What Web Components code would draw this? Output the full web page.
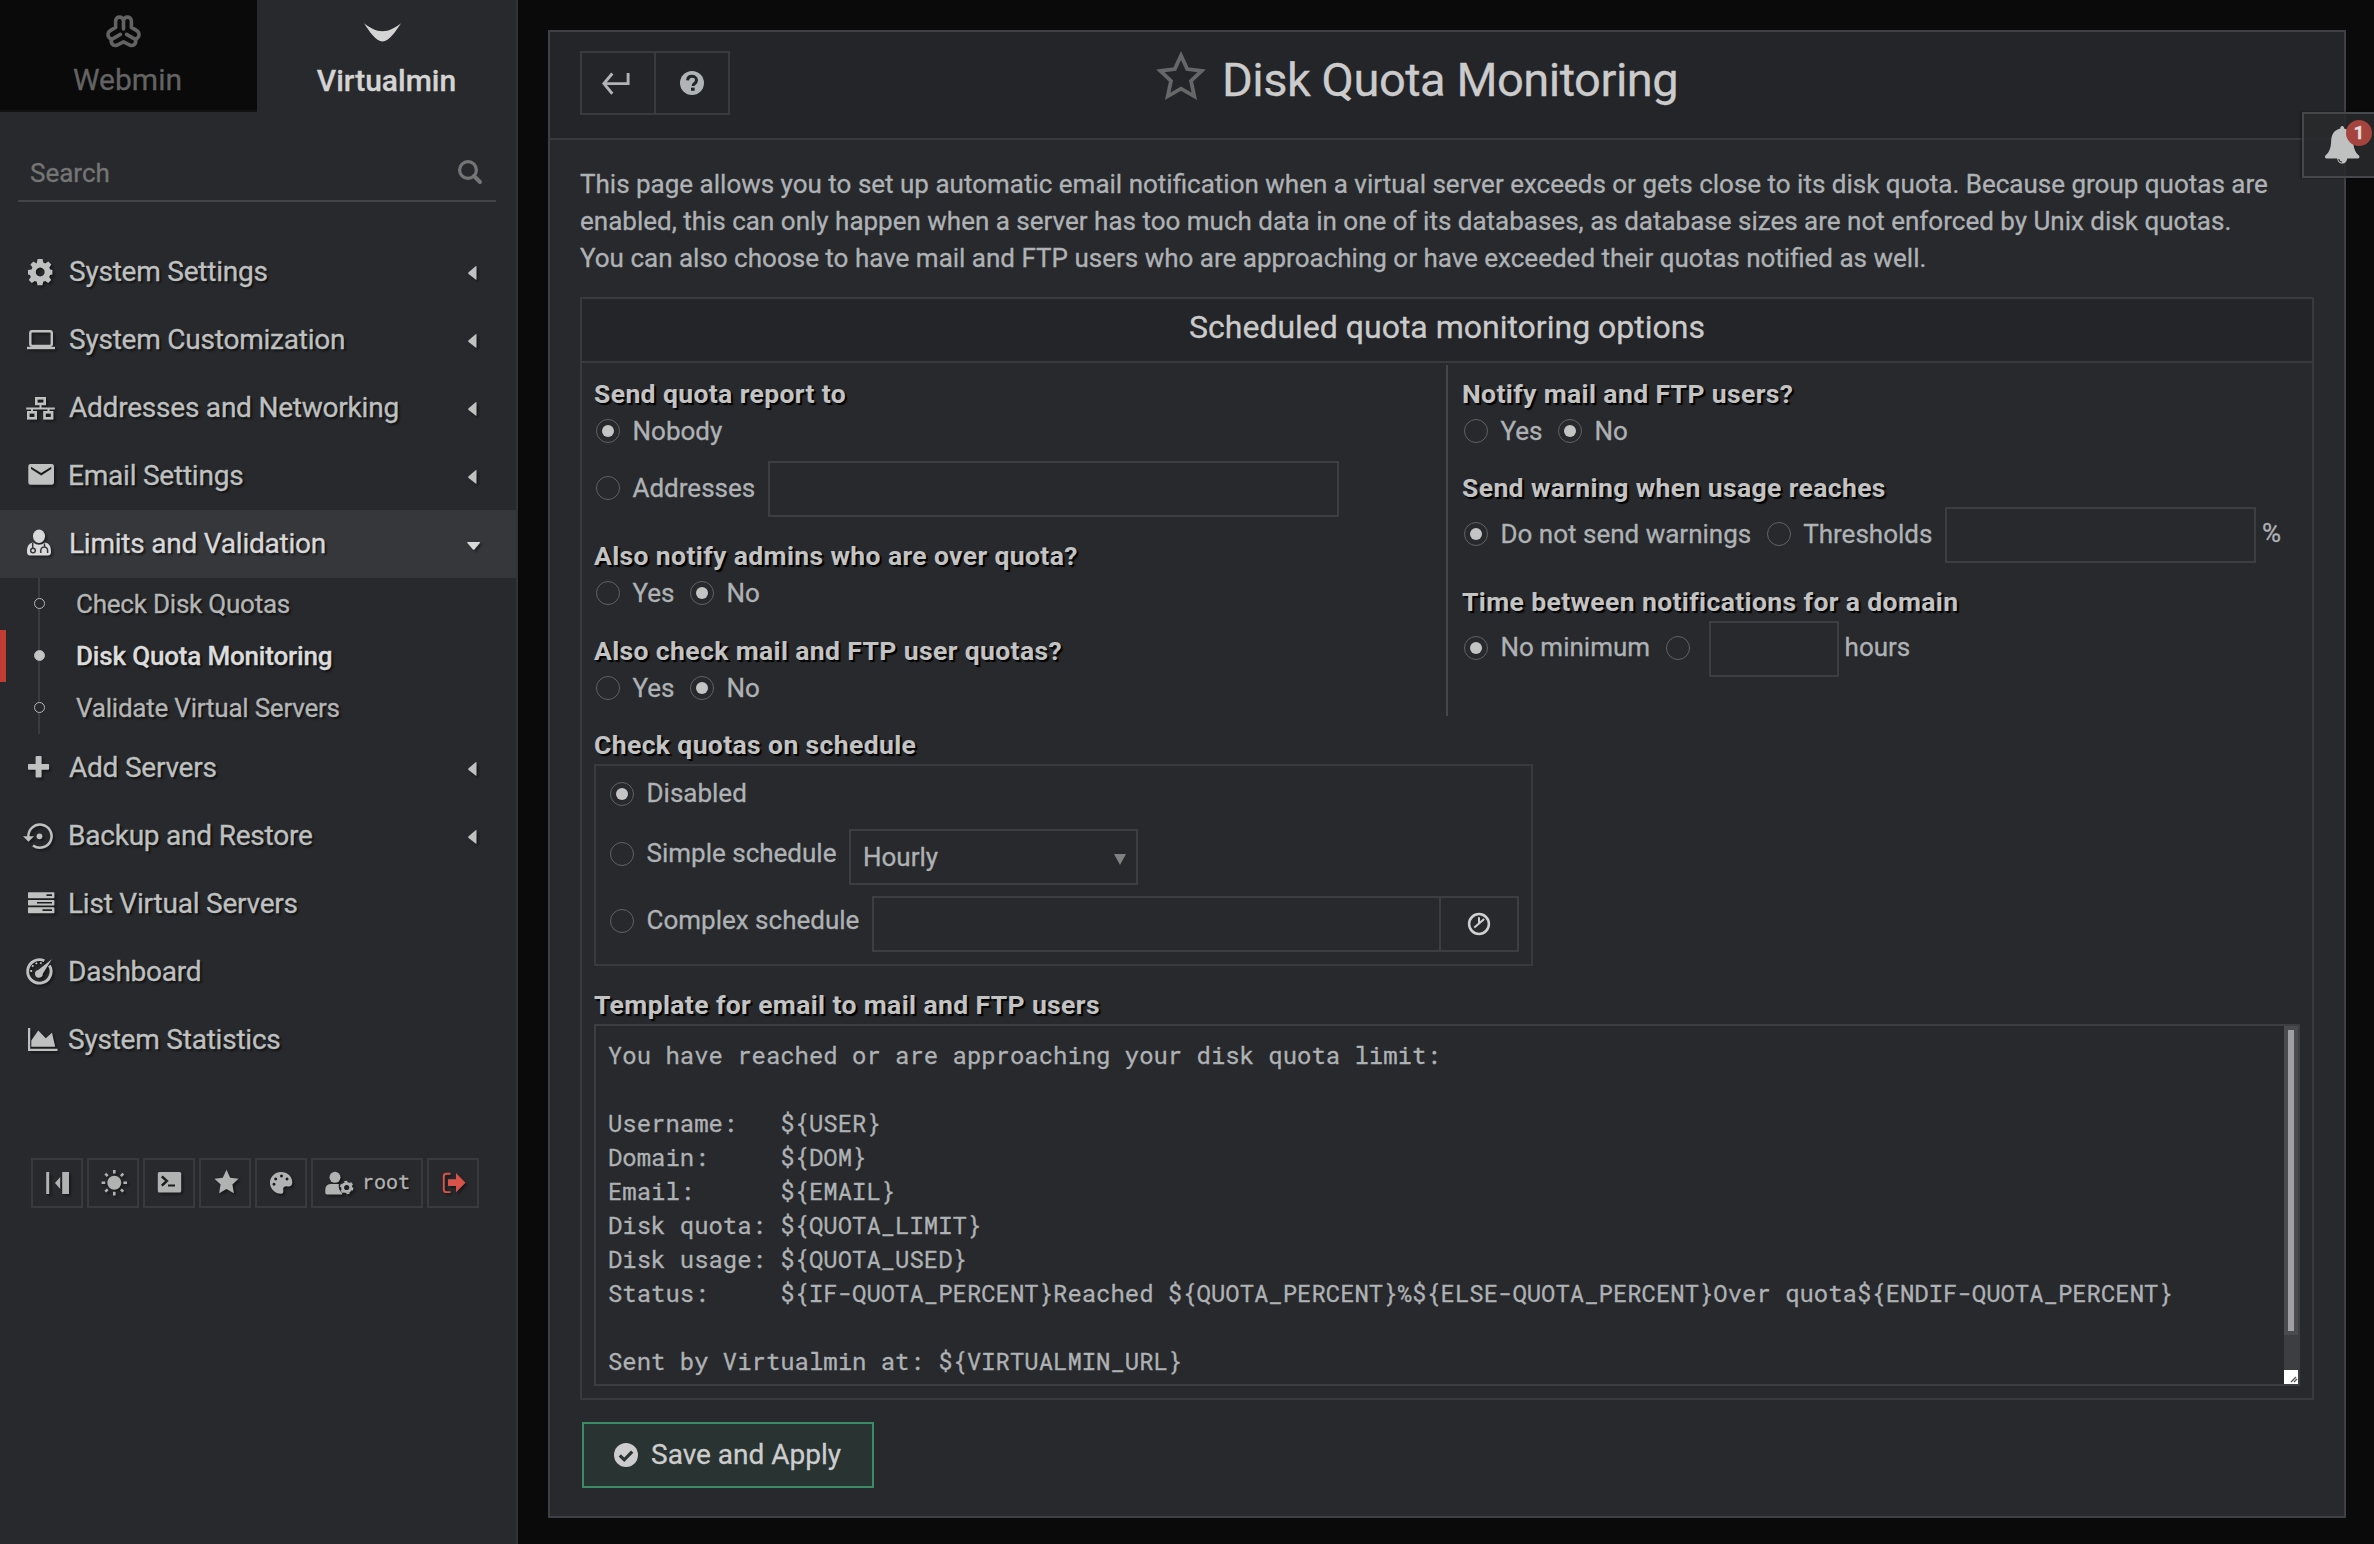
<!DOCTYPE html>
<html lang="en">
<head>
<meta charset="utf-8">
<title>Disk Quota Monitoring</title>
<style>
html,body{margin:0;height:1544px;overflow:hidden;background:#0a0a0a}
body{font-family:Roboto,"Liberation Sans",sans-serif;font-size:26px;line-height:37px;color:#aeb2b5;-webkit-text-stroke:.3px currentColor}
</style>
</head>
<body>
<vm-app></vm-app>
<script>
const ICONS = {
  webmin:'<g fill="none" stroke="currentColor" stroke-width="3.6" stroke-linecap="round" stroke-linejoin="round"><path d="M17.5 14V6.2C17.5.8 9.6.8 9.6 6.2V12.4L4.6 15.4C1.4 17.3 1.2 20.6 3.4 22.8L5.3 24.6C4.7 29.6 8.2 31.6 11.6 29.8L17.5 26.9 23.4 29.8C26.8 31.6 30.3 29.6 29.7 24.6L31.6 22.8C33.8 20.6 33.6 17.3 30.4 15.4L25.4 12.4V6.2C25.4.8 17.5.8 17.5 6.2M14.4 19.4L5.3 24.6M20.6 19.4L29.7 24.6"/></g>',
  virtualmin:'<path d="M0 .3C6 5 12 8.3 18.5 8.3S31 5 37 .3C32 8 25 18.5 18.5 18.5S5 8 0 .3Z"/>',
  search:'<circle cx="10" cy="10" r="8.4" fill="none" stroke="currentColor" stroke-width="3.2"/><path d="M16 16l6 6" stroke="currentColor" stroke-width="4" stroke-linecap="round"/>',
  /* menu icons are drawn on a 44 x 68 tile */
  gear:'<path fill-rule="evenodd" d="M17.6 21h5l.7 3.6 2 .8 3-2 3 3.2-2 3 .9 2 2.2.4v4.4l-2.3.5-.9 2 2 3-3 3-3-1.900-2 .8-.7 3.500h-5l-.7-3.500-2-.8-3 1.900-3-3 2-3-.9-2L8 36.400V32l3.500-.4.9-2-2-3 3-3.200 3 2 .500-.8zM20.200 29.600a4.400 4.400 0 1 0 .01 0z"/>',
  laptop:'<rect x="10.300" y="25.300" width="21.500" height="14.600" rx="1.800" fill="none" stroke="currentColor" stroke-width="2.400"/><path d="M7 40.800h28v2.400H7z"/>',
  network:'<g fill="none" stroke="currentColor" stroke-width="2.600"><rect x="16.300" y="24.300" width="8.400" height="5.600"/><rect x="8.300" y="38.300" width="7.400" height="6"/><rect x="24.500" y="38.300" width="7.600" height="6"/></g><path d="M6.200 33.400h28.600v2.200H6.200zM19.500 30h2v4h-2zM11 35h2v3h-2zM27.500 35h2v3h-2z"/>',
  mail:'<path fill-rule="evenodd" d="M10.500 22h21.300a2.200 2.200 0 0 1 2.200 2.200v16.300a2.200 2.200 0 0 1-2.200 2.200H10.500a2.200 2.200 0 0 1-2.200-2.200V24.200A2.200 2.200 0 0 1 10.500 22zM11 24.700v2.400l10.200 6.300 10.100-6.300v-2.400l-10.100 6.200z"/>',
  doctor:'<ellipse cx="19" cy="26.300" rx="6" ry="6.700"/><path d="M13 32.500q6 4.500 12 0c4.500.8 6 4 6 9.500 0 2.600-1.500 3.400-3 3.400H10c-2 0-3-1-3-3.400 0-5.500 1.500-8.700 6-9.500z"/><g fill="none" stroke="#36373b" stroke-width="1.500"><circle cx="13" cy="40.500" r="2.300"/><path d="M12.700 33v5M20.800 43v-2.600a3.400 3.400 0 0 1 6.800 0V43M24.500 33.500v3.600"/></g>',
  plus:'<path d="M16.500 22h4.200q.9 0 .9.900v7h6.600q.9 0 .9.900v4q0 .9-.9.900h-6.600v6.900q0 .9-.9.900h-4.200q-.9 0-.9-.9v-6.900H8.900q-.9 0-.9-.9v-4q0-.9.9-.9h6.700v-7q0-.9.900-.9z"/>',
  backup:'<path d="M8.400 35A11.600 11.600 0 1 1 13 43.400" fill="none" stroke="currentColor" stroke-width="2.500"/><circle cx="19.500" cy="34.300" r="2.900"/><path d="M3 34.300h11l-5.500 5.500z"/>',
  servers:'<path fill-rule="evenodd" d="M8.700 22.300h25q.7 0 .7.700v4.600q0 .7-.7.700h-25q-.7 0-.7-.7V23q0-.7.700-.7zM26.500 24.300v1.800H32v-1.800zM8.700 30h25q.7 0 .7.700v4q0 .7-.7.700h-25q-.7 0-.7-.7v-4q0-.7.700-.7zM17 32v1.500h15V32zM8.700 37.300h25q.7 0 .7.700v4.600q0 .7-.7.700h-25q-.7 0-.7-.7V38q0-.7.700-.7zM22.500 39.300v1.800H32v-1.800z"/>',
  gauge:'<path d="M29.400 27.400A11.700 11.700 0 1 1 24.300 22.800" fill="none" stroke="currentColor" stroke-width="2.900"/><path d="M31.800 21.200l-9 14.500a3.900 3.900 0 1 1-4.600-3.800z"/><path d="M10.300 33h1.800M12 27.500l1.500 1.100M16 24.700l.8 1.500M21 24.300l-.3 1.700" stroke="currentColor" stroke-width="1.800"/>',
  area:'<path d="M8 22h2.200v20.800h27.300V45H8z"/><path d="M11.300 34.500l7-10 7.500 7.800 6.200-5.600 3.200 14H11.300z"/>',
  caretL:'<path d="M8.500.7v12.600q0 .8-.9.300L.6 8Q-.2 7.200.6 6.300L7.600.2q.9-.5.9.5z"/>',
  caretD:'<path d="M.8 0h11.600q1.200 0 .4 1L7.700 7.300q-1 1-2 0L.4 1Q-.3 0 .8 0z"/>',
  /* toolbar icons, 52 x 50 tile */
  collapse:'<path d="M13.200 12h3v22h-3zM29.200 12H36v22h-6.800zM27.200 17v12L22 23z"/>',
  sun:'<circle cx="25.300" cy="22.700" r="7"/><path d="M25.300 10v3.600M25.300 31.800v3.600M12.600 22.700h3.600M34.400 22.700H38M16.300 13.700l2.400 2.400M31.900 29.300l2.400 2.400M34.300 13.700l-2.400 2.400M18.700 29.300l-2.400 2.400" stroke="currentColor" stroke-width="2.600"/>',
  terminal:'<path fill-rule="evenodd" d="M14.300 12h20.400a1.500 1.500 0 0 1 1.500 1.500v17.600a1.500 1.500 0 0 1-1.500 1.500H14.300a1.500 1.500 0 0 1-1.500-1.500V13.500a1.500 1.500 0 0 1 1.500-1.500zM16 17.300l4 3.700-4 3.700 1.700 1.800 6-5.500-6-5.500zM23 24.600v1.900h7v-1.900z"/>',
  star:'<path d="M25.500 9.800l3.700 7.900 8.300 1-6.100 5.900 1.500 8.600-7.400-4.200-7.400 4.200 1.500-8.600-6.100-5.900 8.300-1z"/>',
  palette:'<path fill-rule="evenodd" d="M24 12c6.500 0 11.300 4.400 11.300 10.200 0 3-2 4.800-4.600 4.300-3-.6-5 .8-4.500 3.500.4 2.300 0 3.800-2.200 3.800-6 0-11-5-11-11S18 12 24 12zM24.500 14.400a1.500 1.500 0 1 0 .01 0zM18.700 17.400a1.500 1.500 0 1 0 .01 0zM30 17.400a1.500 1.500 0 1 0 .01 0zM17 22.700a1.500 1.500 0 1 0 .01 0z"/>',
  user:'<circle cx="22" cy="17.300" r="5.500"/><path d="M17.500 24h8.300c-.6 4 .8 7 3.300 9v1.500H14q-1.700 0-1.700-1.700v-3.200q0-5 5.200-5.600z"/><circle cx="33.700" cy="27.500" r="4.100" fill="none" stroke="currentColor" stroke-width="3"/><circle cx="33.700" cy="27.500" r="6" fill="none" stroke="currentColor" stroke-width="1.600" stroke-dasharray="3.100 3.180"/>',
  logout:'<path d="M21.500 13.700h-4q-2.700 0-2.700 2.700v13q0 2.700 2.700 2.700h4" fill="none" stroke="currentColor" stroke-width="1.900"/><path d="M19 19.300h8v-6.200L36.500 22.700 27 32.300v-6.200h-8z"/>',
  enter:'<path d="M26.100 1v10.600H3" fill="none" stroke="currentColor" stroke-width="2.900"/><path d="M10.300 1.500L1.900 11.600l8.400 10.100" fill="none" stroke="currentColor" stroke-width="2.900"/>',
  help:'<circle cx="12" cy="12" r="12"/><path d="M7.600 9.400C7.800 6.500 9.600 5.300 12 5.300s4.500 1.400 4.500 3.900c0 3.300-3.400 3.200-3.400 5.800" fill="none" stroke="#242529" stroke-width="3"/><path d="M11 16.600h3.600v3.200H11z" fill="#242529"/>',
  starO:'<path d="M26 5.500l6.200 13.600 14.400 1.700L36 30.900l3.300 15.400L26 38.700l-13.300 7.600L16 30.900 5.400 20.800l14.400-1.700z" fill="none" stroke="currentColor" stroke-width="3.800"/>',
  clock:'<circle cx="12" cy="12" r="9.900" fill="none" stroke="currentColor" stroke-width="2.500"/><path d="M12 5.300v6.300L7.300 15.500M12 11.600l5.200-4.600" fill="none" stroke="currentColor" stroke-width="2"/>',
  check:'<circle cx="12" cy="12" r="12"/><path d="M5.800 12.400l4.400 4.400 8-8.200" fill="none" stroke="#283332" stroke-width="3.200"/>',
  bell:'<path d="M17.200 0c1.200 0 2 1 1.900 2.600 6 1.500 8.800 6 9.100 11.800.4 7.500 1.300 11 6 15.300.6 1.500 0 2.800-1.400 2.800H1.600C.2 32.500-.4 31.200.2 29.700c4.700-4.300 5.600-7.800 6-15.300.3-5.800 3-10.300 9.100-11.800C15.200 1 16 0 17.200 0z"/><path d="M12.200 32h10c0 3.300-2.200 5.600-5 5.600s-5-2.300-5-5.600z"/><path d="M13.800 33c.2 1.800 1.400 3 3.200 3" fill="none" stroke="#28292c" stroke-width="1.100"/>'
};
const make = (name, css, html, up) => customElements.define(name, class extends HTMLElement {
  constructor(){ super(); const r=this.attachShadow({mode:'open'}); r.innerHTML='<style>'+css+'</style>'+(typeof html==='function'?html(this):html); if(up) up(this,r); }
});
const a=(el,n,d='')=>el.hasAttribute(n)?el.getAttribute(n):d;

make('vm-icon',':host{display:block;flex:none}svg{display:block;fill:currentColor;overflow:visible}',
  el=>`<svg width="${a(el,'w')}" height="${a(el,'h')}" viewBox="0 0 ${a(el,'w')} ${a(el,'h')}">${ICONS[a(el,'name')]}</svg>`);

make('vm-tab',`:host{display:flex;flex-direction:column;align-items:center;box-sizing:border-box;height:112px;font-size:30px;line-height:40px}
  :host([active]){width:259px;color:#d4d4d4;font-weight:500}
  :host(:not([active])){width:257px;background:#0a0a0a;border-bottom:2px solid #121212;color:#636363}
  .i{height:44px;display:flex;align-items:center}.t{margin-top:12px}
  :host([active]) .i{margin-left:-8px;margin-top:1px;padding-top:14px;height:34px}
  :host(:not([active])) .i{margin-left:-10px;padding-top:9px}
  :host(:not([active])) .t{margin-top:7px;margin-left:-2px}`,
  `<div class="i"><slot name="icon"></slot></div><div class="t"><slot></slot></div>`);

make('vm-search',`:host{display:flex;justify-content:space-between;align-items:center;box-sizing:border-box;width:478px;height:62px;margin:28px 0 36px 18px;padding:0 14px 0 12px;border-bottom:2px solid #434548;color:#757575}
  vm-icon{margin-top:4px}span{margin-top:6px}`,`<span>Search</span><vm-icon name="search" w="24" h="24"></vm-icon>`);

make('vm-item',`:host{display:flex;align-items:center;height:68px;padding-left:20px;font-size:28px;letter-spacing:-.22px;color:#bfc0c0;text-shadow:2px 2px 2px #0009}
  :host([open]){background:#36373b;color:#d9d9d9}.t{flex:1;margin-left:var(--g,5px);margin-top:-2px;white-space:nowrap}
  vm-icon{filter:drop-shadow(2px 2px 1px #0006)}.l{margin-right:40px;margin-top:1px}.d{margin-right:36px;margin-top:3px}`,
  el=>`<vm-icon name="${a(el,'icon')}" w="44" h="68"></vm-icon><span class="t"><slot></slot></span>${el.hasAttribute('open')?'<vm-icon class="d" name="caretD" w="13" h="8"></vm-icon>':el.hasAttribute('leaf')?'':'<vm-icon class="l" name="caretL" w="8" h="14"></vm-icon>'}`);

make('vm-sub',`:host{display:flex;align-items:center;height:52px;box-sizing:border-box;border-left:6px solid transparent;letter-spacing:-.22px;color:#b4b5b5;text-shadow:2px 2px 2px #0009}
  :host([active]){border-color:#c13c32;color:#dcdcdc;font-weight:500;letter-spacing:-.17px}
  .r{width:11px;height:52px;margin-left:28px;display:flex;align-items:center;background:linear-gradient(#3b3c40,#3b3c40) 4px 0/2px 100% no-repeat}
  i{width:11px;height:11px;box-sizing:border-box;border:1.500px solid #b4b5b5;border-radius:50%;background:#28292c;margin-top:-1px}
  :host([active]) i{background:#c4c4c4}.t{margin-left:31px}`,
  `<span class="r"><i></i></span><span class="t"><slot></slot></span>`);

make('vm-tool',`:host{display:flex;box-sizing:border-box;height:50px;min-width:52px;border:2px solid #393a3e;color:#b1b2b2;font:20px/43px "Roboto Mono","DejaVu Sans Mono",monospace;text-shadow:2px 2px 2px #0008}
  vm-icon{filter:drop-shadow(2px 2px 1px #0006)}`,
  el=>`<vm-icon name="${a(el,'icon')}" w="48" h="46"></vm-icon><slot></slot>`);

make('vm-sidebar',`:host{display:block;box-sizing:border-box;width:518px;height:1544px;background:#28292c;border-right:2px solid #313235}
  .tabs{display:flex}.tools{display:flex;gap:4px;margin:84px 0 0 31px}`,`
  <div class="tabs"><vm-tab><vm-icon slot="icon" name="webmin" w="35" h="33"></vm-icon>Webmin</vm-tab><vm-tab active><vm-icon slot="icon" name="virtualmin" w="37" h="19"></vm-icon>Virtualmin</vm-tab></div>
  <vm-search></vm-search>
  <nav>
  <vm-item icon="gear">System Settings</vm-item>
  <vm-item icon="laptop">System Customization</vm-item>
  <vm-item icon="network">Addresses and Networking</vm-item>
  <vm-item icon="mail" style="--g:4px">Email Settings</vm-item>
  <vm-item icon="doctor" open>Limits and Validation</vm-item>
  <vm-sub>Check Disk Quotas</vm-sub><vm-sub active>Disk Quota Monitoring</vm-sub><vm-sub>Validate Virtual Servers</vm-sub>
  <vm-item icon="plus">Add Servers</vm-item>
  <vm-item icon="backup" style="--g:4px">Backup and Restore</vm-item>
  <vm-item icon="servers" style="--g:4px" leaf>List Virtual Servers</vm-item>
  <vm-item icon="gauge" style="--g:4px" leaf>Dashboard</vm-item>
  <vm-item icon="area" style="--g:4px" leaf>System Statistics</vm-item>
  </nav>
  <div class="tools"><vm-tool icon="collapse"></vm-tool><vm-tool icon="sun"></vm-tool><vm-tool icon="terminal"></vm-tool><vm-tool icon="star"></vm-tool><vm-tool icon="palette"></vm-tool><vm-tool icon="user" style="width:112px"><span style="margin-left:1px">root</span></vm-tool><vm-tool icon="logout" style="color:#d9534a"></vm-tool></div>`);

make('vm-label',':host{display:block;height:37px;font-size:26.5px;font-weight:700;letter-spacing:.38px;color:#c3c3c3;text-shadow:2px 2px 1px #000;white-space:nowrap;-webkit-text-stroke:0}','<slot></slot>');
make('vm-radio',`:host{display:flex;align-items:center;height:37px;margin-right:16px;white-space:nowrap}
  i{flex:none;display:flex;align-items:center;justify-content:center;box-sizing:border-box;width:24px;height:24px;border:1.500px solid #606164;border-radius:50%;margin-right:12px}
  span{position:relative;left:.5px;top:var(--t,.5px)}
  :host([checked]) i::after{content:"";width:12px;height:12px;border-radius:50%;background:#c4c4c4}`,
  `<i></i><span><slot></slot></span>`);
make('vm-input',':host{display:block;box-sizing:border-box;height:56px;border:2px solid #3d3e42;flex:none}','<slot></slot>');
make('vm-row',`:host{display:flex;padding-left:2px}:host([tall]){height:56px}:host([tall]) ::slotted(vm-radio),:host([tall]) ::slotted(span){height:53px;line-height:53px}`,'<slot></slot>');
make('vm-select',':host{display:flex;box-sizing:border-box;justify-content:space-between;align-items:center;width:289px;height:56px;border:2px solid #3d3e42;padding:0 10px 0 12px}i{border:6px solid transparent;border-top:11px solid #808080;border-bottom:0;margin-top:4px}','<slot></slot><i></i>');
make('vm-textarea',`:host{display:flex;justify-content:space-between;box-sizing:border-box;height:362px;border:2px solid #3d3e42}
  .x{padding:12px 0 0 12px;font:23.930px/34px "Roboto Mono","DejaVu Sans Mono",monospace;white-space:pre;height:330px}
  .s{width:14px;height:358px;display:flex;flex-direction:column;background:#3d3e41}
  .b{height:309px;background:#494b4f;box-sizing:border-box;padding:4px}.b div{width:6px;height:301px;background:#a0a0a2}
  svg{display:block;margin-top:35px;background:#fff}`,
  `<div class="x"><slot></slot></div><div class="s"><div class="b"><div></div></div><svg width="14" height="14"><path d="M7 12l5-5M10 12l3-3" stroke="#555" stroke-width="1.400"/></svg></div>`);

make('vm-header',`:host{display:flex;box-sizing:border-box;height:108px;background:#242529;border-bottom:2px solid #393a3e}
  .b{display:flex;margin:19px 0 0 30px;width:150px;height:64px;box-sizing:border-box;border:2px solid #393a3e;color:#b0b4b7}
  .b div{width:72px;display:flex;align-items:center;justify-content:center;border-right:2px solid #393a3e}.b div+div{border:0}
  .s{margin:18px 0 0 425px;color:#666769}h1{margin:18px 0 0 15px;font:400 47px/60px Roboto,sans-serif;letter-spacing:-.48px;color:#cbcbcb;white-space:nowrap}`,
  `<div class="b"><div><vm-icon name="enter" w="28" h="23" style="margin-right:4px"></vm-icon></div><div><vm-icon name="help" w="24" h="24"></vm-icon></div></div><vm-icon class="s" name="starO" w="52" h="50"></vm-icon><h1><slot></slot></h1>`);

make('vm-quota-form',`:host{display:block;box-sizing:border-box;width:1734px;height:1103px;border:2px solid #393a3e}
  h2{margin:0;height:62px;background:#242529;border-bottom:2px solid #393a3e;font:400 32px/57px Roboto,sans-serif;text-align:center;color:#cbcbcb}
  .c{display:flex;height:353px}.l{width:852px;padding:12px 0 0 12px}
  .r{flex:1;height:341px;margin-top:2px;border-left:2px solid #45464a;padding:10px 0 0 14px}
  .w{padding:10px 12px 0}.box{box-sizing:border-box;width:939px;height:202px;border:2px solid #393a3e;margin:1px 0 20px;padding:9px 0 0 14px;--t:0}
  .clock{width:77px;display:flex;align-items:center;justify-content:center;border-left:2px solid #3d3e42;height:52px;color:#d0d0d0}`,`
  <h2>Scheduled quota monitoring options</h2>
  <div class="c"><div class="l">
   <vm-label>Send quota report to</vm-label><vm-row><vm-radio checked>Nobody</vm-radio></vm-row>
   <vm-row tall style="margin-top:12px"><vm-radio style="margin-right:13px">Addresses</vm-radio><vm-input style="width:571px"></vm-input></vm-row>
   <vm-label style="margin-top:20px">Also notify admins who are over quota?</vm-label><vm-row><vm-radio>Yes</vm-radio><vm-radio checked>No</vm-radio></vm-row>
   <vm-label style="margin-top:21px">Also check mail and FTP user quotas?</vm-label><vm-row><vm-radio>Yes</vm-radio><vm-radio checked>No</vm-radio></vm-row>
  </div><div class="r">
   <vm-label>Notify mail and FTP users?</vm-label><vm-row><vm-radio>Yes</vm-radio><vm-radio checked>No</vm-radio></vm-row>
   <vm-label style="margin-top:20px">Send warning when usage reaches</vm-label>
   <vm-row tall style="margin-top:1px"><vm-radio checked>Do not send warnings</vm-radio><vm-radio style="margin-right:13px">Thresholds</vm-radio><vm-input style="width:311px"></vm-input><span style="margin-left:6px">%</span></vm-row>
   <vm-label style="margin-top:20px">Time between notifications for a domain</vm-label>
   <vm-row tall style="margin-top:1px;--t:0"><vm-radio checked>No minimum</vm-radio><vm-radio style="margin-right:7px"></vm-radio><vm-input style="width:130px"></vm-input><span style="margin-left:6px">hours</span></vm-row>
  </div></div>
  <div class="w"><vm-label>Check quotas on schedule</vm-label>
   <div class="box"><vm-row style="margin-left:-2px"><vm-radio checked>Disabled</vm-radio></vm-row>
    <vm-row tall style="margin:17px 0 0 -2px"><vm-radio style="margin-right:13px;height:49px">Simple schedule</vm-radio><vm-select>Hourly</vm-select></vm-row>
    <vm-row tall style="margin:11px 0 0 -2px"><vm-radio style="margin-right:13px;height:49px">Complex schedule</vm-radio><vm-input style="width:647px"><div class="clock" style="margin-left:565px"><vm-icon name="clock" w="24" h="24" style="margin-right:1px"></vm-icon></div></vm-input></vm-row></div>
   <vm-label style="margin-bottom:1px">Template for email to mail and FTP users</vm-label>
   <vm-textarea></vm-textarea></div>`,
  (el,r)=>{ r.querySelector('vm-textarea').textContent='You have reached or are approaching your disk quota limit:\n\nUsername:   ${USER}\nDomain:     ${DOM}\nEmail:      ${EMAIL}\nDisk quota: ${QUOTA_LIMIT}\nDisk usage: ${QUOTA_USED}\nStatus:     ${IF-QUOTA_PERCENT}Reached ${QUOTA_PERCENT}%${ELSE-QUOTA_PERCENT}Over quota${ENDIF-QUOTA_PERCENT}\n\nSent by Virtualmin at: ${VIRTUALMIN_URL}'; });

make('vm-save',`:host{display:flex;align-items:center;box-sizing:border-box;width:292px;height:66px;border:2px solid #3c8b67;background:#283332;margin:22px 0 0 2px;padding-left:30px;font-size:28px;color:#cdcdcd}
  vm-icon{margin-right:13px}span{margin-top:-2px}`,`<vm-icon name="check" w="24" h="24"></vm-icon><span><slot></slot></span>`);

make('vm-panel',`:host{display:block;box-sizing:border-box;width:1798px;height:1488px;margin:30px 0 0 30px;border:2px solid #3f4044;background:#28292c}
  .body{padding:26px 30px 0}p{margin:0 0 20px;line-height:37.140px;white-space:nowrap}`,`
  <vm-header>Disk Quota Monitoring</vm-header>
  <div class="body"><p>This page allows you to set up automatic email notification when a virtual server exceeds or gets close to its disk quota. Because group quotas are<br>enabled, this can only happen when a server has too much data in one of its databases, as database sizes are not enforced by Unix disk quotas.<br>You can also choose to have mail and FTP users who are approaching or have exceeded their quotas notified as well.</p>
  <vm-quota-form></vm-quota-form><vm-save>Save and Apply</vm-save></div>`);

make('vm-alerts',`:host{position:absolute;right:0;top:112px;box-sizing:border-box;width:72px;height:66px;border:2px solid #46474b;border-right:0;background:#28292cdd;box-shadow:-2px 0 2px #0004;color:#bfc0c0}
  vm-icon{margin:12px 0 0 21px}b{position:absolute;left:42px;top:6px;width:26px;height:26px;border-radius:50%;background:#a5443d;color:#dedede;font:700 19px/25px Roboto,sans-serif;text-align:center}`,
  `<vm-icon name="bell" w="35" h="38"></vm-icon><b>1</b>`);

make('vm-app',':host{display:flex;position:relative;width:2374px;height:1544px;background:#0a0a0a}',
  '<vm-sidebar></vm-sidebar><vm-panel></vm-panel><vm-alerts></vm-alerts>');
</script>
</body>
</html>
